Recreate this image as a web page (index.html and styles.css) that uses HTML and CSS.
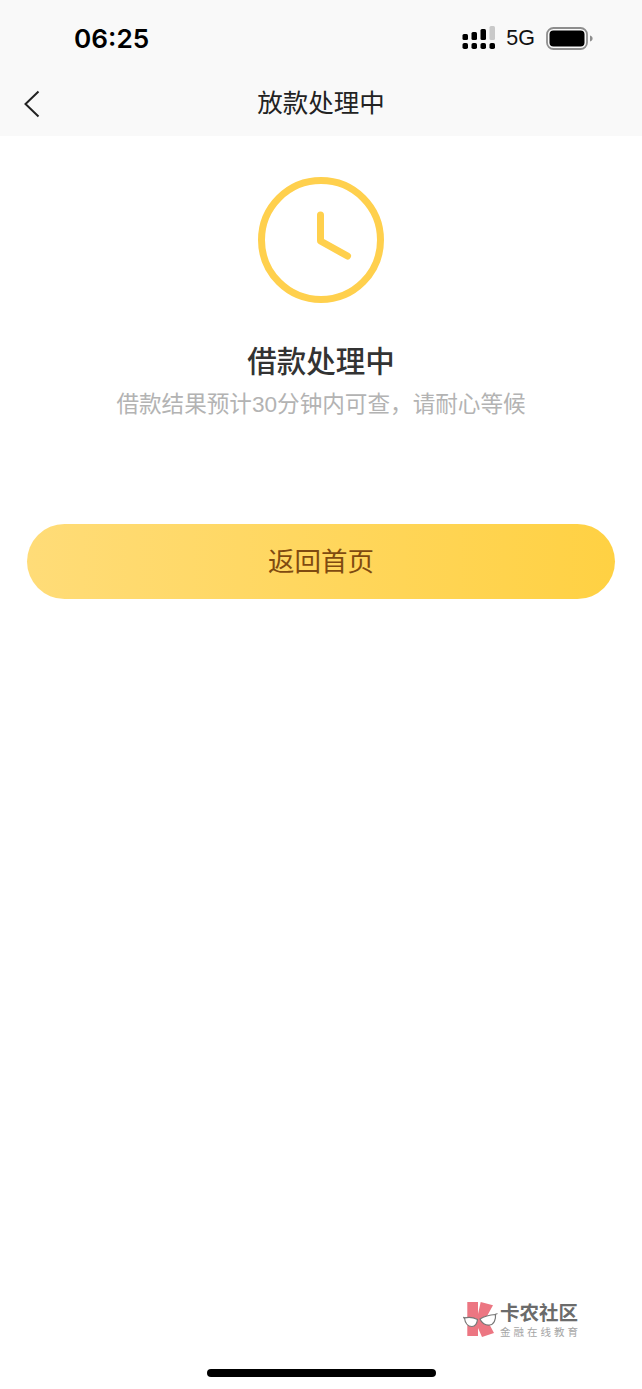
FILE: index.html
```html
<!DOCTYPE html>
<html>

<head>
  <link rel="stylesheet" href="styles.css">
</head>

<body>
  <div class="page">
    <div class="top-bar">
      <div class="status-bar">
        <span class="time">06:25</span>
        <div class="status-icons">
          <svg class="signal" width="34" height="24" viewBox="0 0 34 24">
            <rect x="0.500" y="8" width="5.500" height="6" rx="1.500" fill="#000" />
            <rect x="9.500" y="6" width="5.500" height="8" rx="1.500" fill="#000" />
            <rect x="18.500" y="3" width="5.500" height="11" rx="1.500" fill="#000" />
            <rect x="27.500" y="0" width="5.500" height="14" rx="1.500" fill="#c9c9c9" />
            <rect x="0.500" y="17" width="5.500" height="6" rx="1.800" fill="#000" />
            <rect x="9.500" y="17" width="5.500" height="6" rx="1.800" fill="#000" />
            <rect x="18.500" y="17" width="5.500" height="6" rx="1.800" fill="#000" />
            <rect x="27.500" y="17" width="5.500" height="6" rx="1.800" fill="#000" />
          </svg>
          <span class="network">5G</span>
          <svg class="battery" width="47" height="23" viewBox="0 0 47 23">
            <rect x="1" y="1" width="40" height="21" rx="6.500" fill="none" stroke="#8e8e8e" stroke-width="1.800" />
            <rect x="3.500" y="3.500" width="35" height="16" rx="4" fill="#000" />
            <path d="M44 8.500c1.800 .6 2.600 1.700 2.600 3s-.8 2.400-2.600 3z" fill="#8e8e8e" />
          </svg>
        </div>
      </div>
      <div class="nav-bar">
        <svg class="back" width="18" height="28" viewBox="0 0 18 28">
          <path d="M15.500 1.500L2.500 14l13 12.500" fill="none" stroke="#222" stroke-width="2" />
        </svg>
        <h1 class="nav-title">放款处理中</h1>
      </div>
    </div>

    <div class="result">
      <svg class="clock" width="126" height="126" viewBox="0 0 126 126">
        <circle cx="63" cy="63" r="59.500" fill="none" stroke="#ffd04d" stroke-width="7" />
        <path d="M62.500 38v26l27 15" fill="none" stroke="#ffd04d" stroke-width="7" stroke-linecap="round" stroke-linejoin="round" />
      </svg>
      <h2 class="result-title">借款处理中</h2>
      <p class="result-desc">借款结果预计30分钟内可查&#xFF0C;请耐心等候</p>
    </div>

    <button class="home-btn">返回首页</button>

    <div class="watermark">
      <svg class="watermark-logo" width="36" height="38" viewBox="0 0 36 38">
        <path d="M5.300 2H16V14L18.700 2 31 5.300 24 18 32 33 20 37 16 28V36H5.300z" fill="#ec7682" />
        <path d="M1 17.500l3 .5M33 14.500l2.500-1" fill="none" stroke="#888" stroke-width="1.300" />
        <path d="M2.500 18c4-1 9-.5 13 1.500-.5 4-2 7-5.500 7-4 0-7-3.500-7.500-8.500zM18 19c4-2.500 9-4 15.500-4.500 .5 5-1.500 10-6 10.500-4 .5-8-2-9.500-6z" fill="#fff" stroke="#777" stroke-width="1.200" />
      </svg>
      <div class="watermark-text">
        <span class="watermark-name">卡农社区</span>
        <span class="watermark-sub">金融在线教育</span>
      </div>
    </div>

    <div class="home-indicator"></div>
  </div>
</body>

</html>
```

FILE: styles.css
```css
* {
  box-sizing: border-box;
}

html,
body {
  margin: 0;
  padding: 0;
}

body {
  background: #fff;
  font-family: "Liberation Sans", "Noto Sans CJK SC", sans-serif;
}

.page {
  position: relative;
  width: 642px;
  height: 1389px;
  overflow: hidden;
}

.top-bar {
  height: 136px;
  background: #f9f9f9;
}

.status-bar {
  display: flex;
  align-items: center;
  justify-content: space-between;
  height: 76px;
  padding: 0 48px 0 74px;
}

.time {
  font-family: Inter, "Liberation Sans", sans-serif;
  font-size: 26.200px;
  font-weight: 600;
  color: #000;
}

.status-icons {
  display: flex;
  align-items: center;
  gap: 10px;
  margin-right: 1px;
}

.network {
  font-size: 21.500px;
  color: #111;
}

.battery {
  margin-left: 1px;
}

.nav-bar {
  position: relative;
  display: flex;
  align-items: center;
  justify-content: center;
  height: 54px;
  padding-bottom: 6px;
}

.back {
  position: absolute;
  left: 23px;
  top: 14px;
}

.nav-title {
  margin: 0;
  font-size: 25.500px;
  font-weight: 400;
  color: #222;
}

.result {
  display: flex;
  flex-direction: column;
  align-items: center;
  padding-top: 41px;
}

.result-title {
  margin: 32px 0 0;
  font-size: 29.500px;
  line-height: 54px;
  font-weight: 500;
  color: #333;
}

.result-desc {
  margin: 0;
  font-size: 22.600px;
  line-height: 32px;
  color: #b3b3b3;
}

.home-btn {
  display: block;
  width: 588px;
  height: 75px;
  margin: 103px 0 0 27px;
  padding: 0 0 5px;
  border: 0;
  border-radius: 38px;
  background: linear-gradient(90deg, #ffdc78, #ffd143);
  font-family: inherit;
  font-size: 26.500px;
  color: #7f4a10;
}

.watermark {
  position: absolute;
  left: 462px;
  top: 1300px;
  display: flex;
  gap: 2px;
}

.watermark-text {
  display: flex;
  flex-direction: column;
}

.watermark-name {
  font-size: 19.500px;
  line-height: 26px;
  font-weight: 700;
  color: #6b6b6b;
}

.watermark-sub {
  font-size: 10.500px;
  line-height: 12px;
  letter-spacing: 3px;
  color: #a5a5a5;
}

.home-indicator {
  position: absolute;
  left: 207px;
  top: 1369px;
  width: 229px;
  height: 8px;
  border-radius: 4px;
  background: #000;
}
```
